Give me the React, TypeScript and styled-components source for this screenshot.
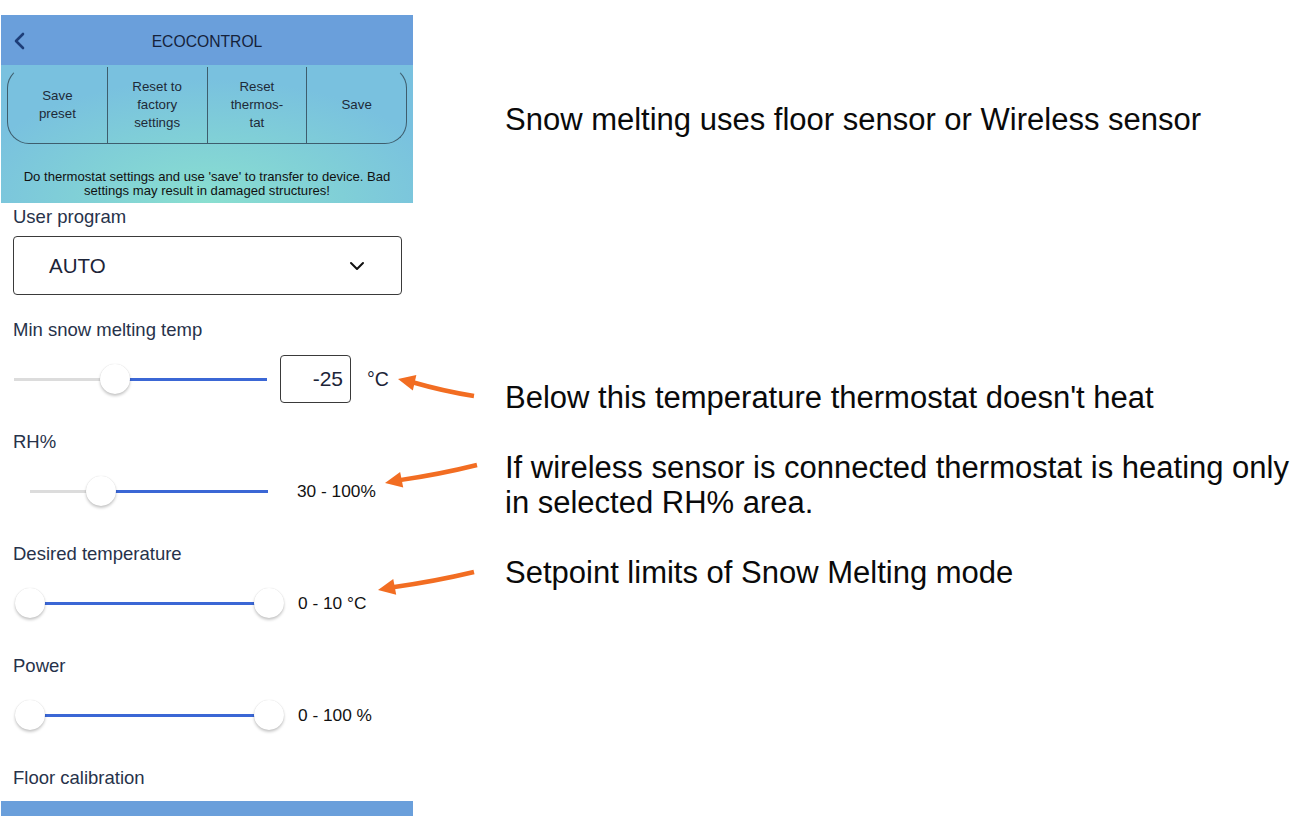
import styled, { createGlobalStyle } from 'styled-components';

const GlobalStyle = createGlobalStyle`
  html, body {
    margin: 0;
    padding: 0;
    background: #ffffff;
    overflow: hidden;
  }
  body {
    font-family: "Liberation Sans", Arial, sans-serif;
  }
`;

const Page = styled.div`
  position: relative;
  display: flex;
  align-items: flex-start;
  width: 1301px;
  height: 816px;
  overflow: hidden;
`;

const Phone = styled.div`
  display: flex;
  flex-direction: column;
  width: 412px;
  margin: 15px 0 0 1px;
  flex-shrink: 0;
  & > * {
    flex-shrink: 0;
  }
`;

const Header = styled.div`
  position: relative;
  height: 50px;
  box-sizing: border-box;
  padding-top: 3px;
  background: #6a9fdb;
  display: flex;
  align-items: center;
  justify-content: center;
  font-size: 15.7px;
  color: #15223a;
`;

const BackBtn = styled.svg`
  position: absolute;
  left: 12px;
  top: 17px;
`;

const Banner = styled.div`
  height: 138px;
  padding: 1px 6px 0 6px;
  box-sizing: border-box;
  background: radial-gradient(ellipse 60% 90% at 50% 100%, #8adfd0 0%, #80cfd7 55%, #79c1df 100%);
`;

const ButtonGroup = styled.div`
  display: flex;
  height: 76px;
  border: 1px solid #3e5d6d;
  border-top-color: transparent;
  border-radius: 22px;
  overflow: hidden;
`;

const GroupButton = styled.div`
  flex: 1;
  display: flex;
  align-items: center;
  justify-content: center;
  text-align: center;
  font-size: 13.3px;
  line-height: 18px;
  color: #1e2a38;
  & + & {
    border-left: 1px solid #3e5d6d;
  }
`;

const Warning = styled.div`
  margin-top: 26px;
  text-align: center;
  font-size: 13.1px;
  line-height: 14px;
  color: #111;
`;

const Form = styled.div`
  display: flex;
  flex-direction: column;
  padding: 0 12px;
`;

const Label = styled.div`
  font-size: 18.5px;
  line-height: 20px;
  height: 20px;
  color: #27324a;
  white-space: nowrap;
`;

const SelectBox = styled.div`
  margin-top: 9px;
  width: 389px;
  height: 59px;
  box-sizing: border-box;
  border: 1px solid #3a3a3a;
  border-radius: 4px;
  display: flex;
  align-items: center;
  justify-content: space-between;
  padding: 0 36px 0 35px;
  font-size: 20.5px;
  color: #1c2438;
`;

const Fields = styled.div`
  display: flex;
  flex-direction: column;
  gap: 29px;
  margin-top: 25px;
`;

const Field = styled.div`
  display: flex;
  flex-direction: column;
`;

const ControlRow = styled.div`
  margin-top: 15px;
  height: 48px;
  display: flex;
  align-items: center;
`;

const SliderBox = styled.div<{ $width: number; $offset: number }>`
  position: relative;
  width: ${(p) => p.$width}px;
  height: 48px;
  margin-left: ${(p) => p.$offset}px;
  flex-shrink: 0;
`;

const Track = styled.div<{ $on?: boolean }>`
  position: absolute;
  top: 23px;
  height: 3px;
  background: ${(p) => (p.$on ? '#3b67d5' : '#dcdcdc')};
`;

const Thumb = styled.div`
  position: absolute;
  top: 9px;
  width: 30px;
  height: 30px;
  margin-left: -15px;
  border-radius: 50%;
  background: #ffffff;
  box-shadow: 0 2px 3px rgba(0, 0, 0, 0.22), 0 0 1px rgba(0, 0, 0, 0.15);
`;

const NumberBox = styled.div`
  margin-left: 13px;
  width: 71px;
  height: 48px;
  box-sizing: border-box;
  border: 1px solid #3a3a3a;
  border-radius: 4px;
  display: flex;
  align-items: center;
  justify-content: flex-end;
  padding-right: 7px;
  font-size: 21px;
  color: #1c2438;
`;

const Unit = styled.div`
  margin-left: 16px;
  font-size: 19.5px;
  color: #1c2438;
`;

const RangeText = styled.div`
  margin-left: 29px;
  font-size: 17.3px;
  color: #111;
  white-space: nowrap;
`;

const Floor = styled.div`
  margin-top: 29px;
`;

const BottomBar = styled.div`
  margin-top: 13px;
  height: 20px;
  background: #6a9fdb;
`;

const Notes = styled.div`
  display: flex;
  flex-direction: column;
  margin-left: 92px;
  padding-top: 102px;
`;

const Note = styled.div<{ $gap: number }>`
  margin-top: ${(p) => p.$gap}px;
  font-size: 31px;
  line-height: 35px;
  color: #0a0a0a;
  white-space: nowrap;
`;

const Overlay = styled.svg`
  position: absolute;
  left: 0;
  top: 0;
  pointer-events: none;
`;

type SliderProps = { width: number; offset: number; lo: number; hi: number; single?: boolean };

const Slider = ({ width, offset, lo, hi, single }: SliderProps) => (
  <SliderBox $width={width} $offset={offset}>
    <Track style={{ left: 0, width: lo * width }} />
    <Track $on style={{ left: lo * width, width: (hi - lo) * width }} />
    <Thumb style={{ left: lo * width }} />
    {!single && <Thumb style={{ left: hi * width }} />}
  </SliderBox>
);

type ArrowProps = { x1: number; y1: number; x2: number; y2: number; bend: number };

const Arrow = ({ x1, y1, x2, y2, bend }: ArrowProps) => {
  const dx = x2 - x1;
  const dy = y2 - y1;
  const len = Math.hypot(dx, dy);
  const ux = dx / len;
  const uy = dy / len;
  const head = 17;
  const half = 8;
  const bx = x2 - ux * head;
  const by = y2 - uy * head;
  const px = -uy;
  const py = ux;
  const cx = (x1 + bx) / 2 + px * bend;
  const cy = (y1 + by) / 2 + py * bend;
  return (
    <g>
      <path d={`M${x1},${y1} Q${cx},${cy} ${bx + ux * 2},${by + uy * 2}`} stroke="#f26d22" strokeWidth={4.5} fill="none" />
      <polygon
        points={`${x2},${y2} ${bx + px * half},${by + py * half} ${bx - px * half},${by - py * half}`}
        fill="#f26d22"
      />
    </g>
  );
};

const App = () => {
  return (
    <Page>
      <GlobalStyle />
      <Phone>
        <Header>
          <BackBtn width="14" height="18" viewBox="0 0 14 18">
            <path d="M10 2 L3 9 L10 16" stroke="#1d3d78" strokeWidth="2.6" fill="none" strokeLinecap="round" strokeLinejoin="round" />
          </BackBtn>
          ECOCONTROL
        </Header>
        <Banner>
          <ButtonGroup>
            <GroupButton>Save<br />preset</GroupButton>
            <GroupButton>Reset to<br />factory<br />settings</GroupButton>
            <GroupButton>Reset<br />thermos-<br />tat</GroupButton>
            <GroupButton>Save</GroupButton>
          </ButtonGroup>
          <Warning>
            Do thermostat settings and use 'save' to transfer to device. Bad<br />
            settings may result in damaged structures!
          </Warning>
        </Banner>
        <Form>
          <Label style={{ marginTop: 4 }}>User program</Label>
          <SelectBox>
            AUTO
            <svg width="16" height="10" viewBox="0 0 16 10">
              <path d="M2 2 L8 8 L14 2" stroke="#111" strokeWidth="2" fill="none" strokeLinecap="round" strokeLinejoin="round" />
            </svg>
          </SelectBox>
          <Fields>
            <Field>
              <Label>Min snow melting temp</Label>
              <ControlRow>
                <Slider width={253} offset={1} lo={0.4} hi={1} single />
                <NumberBox>-25</NumberBox>
                <Unit>°C</Unit>
              </ControlRow>
            </Field>
            <Field>
              <Label>RH%</Label>
              <ControlRow>
                <Slider width={238} offset={17} lo={0.3} hi={1} single />
                <RangeText>30 - 100%</RangeText>
              </ControlRow>
            </Field>
            <Field>
              <Label>Desired temperature</Label>
              <ControlRow>
                <Slider width={239} offset={17} lo={0} hi={1} />
                <RangeText>0 - 10 °C</RangeText>
              </ControlRow>
            </Field>
            <Field>
              <Label>Power</Label>
              <ControlRow>
                <Slider width={239} offset={17} lo={0} hi={1} />
                <RangeText>0 - 100 %</RangeText>
              </ControlRow>
            </Field>
          </Fields>
          <Floor>
            <Label>Floor calibration</Label>
          </Floor>
        </Form>
        <BottomBar />
      </Phone>
      <Notes>
        <Note $gap={0}>Snow melting uses floor sensor or Wireless sensor</Note>
        <Note $gap={243}>Below this temperature thermostat doesn't heat</Note>
        <Note $gap={35}>
          If wireless sensor is connected thermostat is heating only<br />
          in selected RH% area.
        </Note>
        <Note $gap={35}>Setpoint limits of Snow Melting mode</Note>
      </Notes>
      <Overlay width="1301" height="816" viewBox="0 0 1301 816">
        <Arrow x1={474} y1={396} x2={398} y2={379} bend={-2} />
        <Arrow x1={477} y1={465} x2={385} y2={483} bend={-2} />
        <Arrow x1={474} y1={572} x2={378} y2={590} bend={-2} />
      </Overlay>
    </Page>
  );
};

export default App;
